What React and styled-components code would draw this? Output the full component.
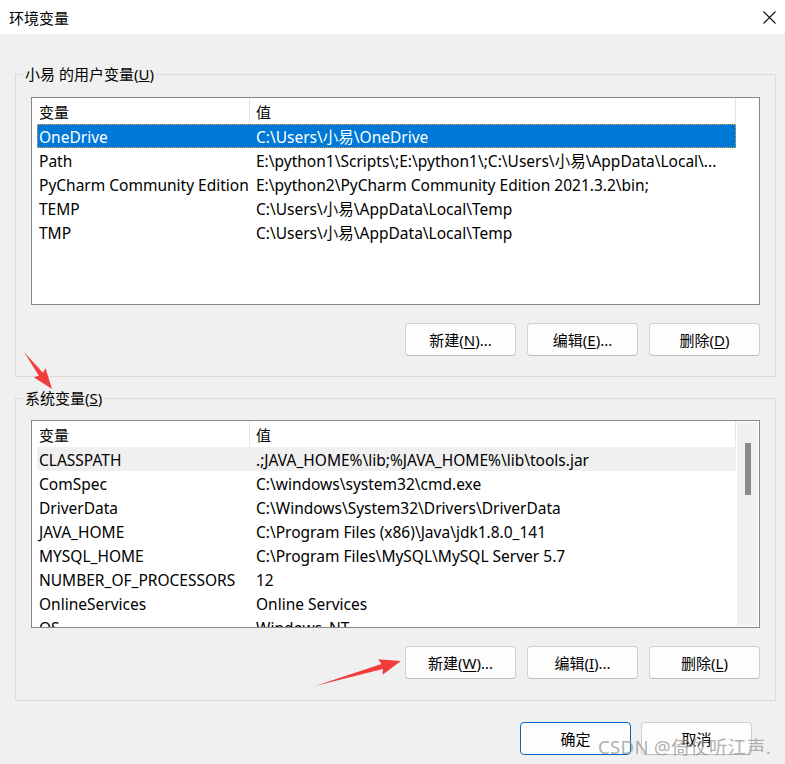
import React from 'react';
import styled, { createGlobalStyle } from 'styled-components';

const Global = createGlobalStyle`
  html, body { margin: 0; padding: 0; }
  body {
    width: 785px; height: 764px; overflow: hidden;
    font-family: "Noto Sans", "Noto Sans CJK SC", sans-serif;
    color: #000;
  }
  * { box-sizing: border-box; }
`;

const Window = styled.div`
  position: relative;
  width: 785px;
  height: 764px;
  background: #f0f0f0;
  display: flex;
  flex-direction: column;
`;

const TitleBar = styled.div`
  height: 34px;
  flex: none;
  background: #fff;
  display: flex;
  align-items: center;
  justify-content: space-between;
  padding: 0 9px 0 9px;
  font-size: 15px;
`;

const Body = styled.div`
  flex: 1;
  padding: 40px 9px 0 15px;
  display: flex;
  flex-direction: column;
`;

const GroupBox = styled.div`
  position: relative;
  border: 1px solid #dcdcdc;
  padding: ${p => p.$top}px 15px ${p => p.$bottom}px 15px;
  margin-top: ${p => p.$mt || 0}px;
`;

const Legend = styled.span`
  position: absolute;
  top: -11px;
  left: 7px;
  padding: 0 2px;
  background: #f0f0f0;
  font-size: 15px;
  line-height: 20px;
  white-space: nowrap;
`;

const ListView = styled.div`
  height: 208px;
  border: 1px solid #828790;
  background: #fff;
  display: flex;
  overflow: hidden;
`;

const ListContent = styled.div`
  flex: 1;
  min-width: 0;
  padding-left: 5px;
  display: flex;
  flex-direction: column;
  overflow: hidden;
`;

const HeaderRow = styled.div`
  height: 26px;
  flex: none;
  display: flex;
  font-size: 15px;
`;

const HeaderCell = styled.div`
  display: flex;
  align-items: center;
  padding-top: 1px;
  border-right: 1px solid #e5e5e5;
  ${p => (p.$first ? 'width: 213px; padding-left: 2px;' : 'flex: 1; padding-left: 6px;')}
`;

const Row = styled.div`
  height: 24px;
  flex: none;
  display: flex;
  align-items: center;
  padding-top: 1px;
  font-size: 15.5px;
  white-space: nowrap;
  background: ${p => (p.$selected ? '#0078d7' : p.$hover ? '#f0f0f0' : 'transparent')};
  color: ${p => (p.$selected ? '#fff' : '#000')};
  outline: ${p => (p.$selected ? '1px dotted #f0a640' : 'none')};
  outline-offset: -1px;
`;

const Cell = styled.div`
  overflow: hidden;
  ${p => (p.$first ? 'width: 213px; flex: none; padding-left: 2px;' : 'flex: 1; padding-left: 6px;')}
`;

const ScrollColumn = styled.div`
  width: 23px;
  flex: none;
  padding: 1px;
  display: flex;
`;

const Track = styled.div`
  flex: 1;
  background: ${p => (p.$visible ? '#f0f0f0' : 'transparent')};
  display: flex;
  justify-content: center;
`;

const Thumb = styled.div`
  width: 6px;
  height: 52px;
  margin-top: 21px;
  background: #8a8a8a;
`;

const ButtonRow = styled.div`
  display: flex;
  justify-content: flex-end;
  gap: ${p => p.$gap || 11}px;
  margin-top: ${p => p.$mt}px;
  padding-right: ${p => p.$pr || 0}px;
`;

const Button = styled.button`
  width: 111px;
  height: 33px;
  border-radius: 4px;
  border: 1px solid ${p => (p.$default ? '#0067c0' : '#d0d0d0')};
  border-bottom-color: ${p => (p.$default ? '#0067c0' : '#bcbcbc')};
  background: #fdfdfd;
  font-family: inherit;
  font-size: 15px;
  color: #000;
  padding: 0;
  display: flex;
  align-items: center;
  justify-content: center;
  u { text-underline-offset: 2px; }
`;

const Watermark = styled.div`
  position: absolute;
  right: 14px;
  bottom: 5px;
  font-size: 18.5px;
  color: rgba(150, 150, 150, 0.75);
  letter-spacing: 0.4px;
  pointer-events: none;
`;

const Overlay = styled.svg`
  position: absolute;
  left: 0;
  top: 0;
  pointer-events: none;
`;

const userVars = [
  ['OneDrive', 'C:\\Users\\小易\\OneDrive'],
  ['Path', 'E:\\python1\\Scripts\\;E:\\python1\\;C:\\Users\\小易\\AppData\\Local\\...'],
  ['PyCharm Community Edition', 'E:\\python2\\PyCharm Community Edition 2021.3.2\\bin;'],
  ['TEMP', 'C:\\Users\\小易\\AppData\\Local\\Temp'],
  ['TMP', 'C:\\Users\\小易\\AppData\\Local\\Temp'],
];

const sysVars = [
  ['CLASSPATH', '.;JAVA_HOME%\\lib;%JAVA_HOME%\\lib\\tools.jar'],
  ['ComSpec', 'C:\\windows\\system32\\cmd.exe'],
  ['DriverData', 'C:\\Windows\\System32\\Drivers\\DriverData'],
  ['JAVA_HOME', 'C:\\Program Files (x86)\\Java\\jdk1.8.0_141'],
  ['MYSQL_HOME', 'C:\\Program Files\\MySQL\\MySQL Server 5.7'],
  ['NUMBER_OF_PROCESSORS', '12'],
  ['OnlineServices', 'Online Services'],
  ['OS', 'Windows_NT'],
];

function VarList({ rows, selected, hover, scroll }) {
  return (
    <ListView>
      <ListContent>
        <HeaderRow>
          <HeaderCell $first>变量</HeaderCell>
          <HeaderCell>值</HeaderCell>
        </HeaderRow>
        {rows.map(([k, v], i) => (
          <Row key={k} $selected={i === selected} $hover={i === hover}>
            <Cell $first>{k}</Cell>
            <Cell>{v}</Cell>
          </Row>
        ))}
      </ListContent>
      <ScrollColumn>
        <Track $visible={scroll}>{scroll && <Thumb />}</Track>
      </ScrollColumn>
    </ListView>
  );
}

function Label({ text, m, after }) {
  return (
    <>
      {text}(<u>{m}</u>){after}
    </>
  );
}

export default function App() {
  return (
    <>
      <Global />
      <Window>
        <TitleBar>
          <span>环境变量</span>
          <svg width="13" height="13" viewBox="0 0 13 13">
            <path d="M0.5 0.5 L12.5 12.5 M12.5 0.5 L0.5 12.5" stroke="#111" strokeWidth="1.1" fill="none" />
          </svg>
        </TitleBar>
        <Body>
          <GroupBox $top={22} $bottom={20}>
            <Legend>小易 的用户变量(<u>U</u>)</Legend>
            <VarList rows={userVars} selected={0} />
            <ButtonRow $mt={18}>
              <Button><Label text="新建" m="N" after="..." /></Button>
              <Button><Label text="编辑" m="E" after="..." /></Button>
              <Button><Label text="删除" m="D" /></Button>
            </ButtonRow>
          </GroupBox>
          <GroupBox $top={21} $bottom={21} $mt={21}>
            <Legend>系统变量(<u>S</u>)</Legend>
            <VarList rows={sysVars} hover={0} scroll />
            <ButtonRow $mt={18}>
              <Button><Label text="新建" m="W" after="..." /></Button>
              <Button><Label text="编辑" m="I" after="..." /></Button>
              <Button><Label text="删除" m="L" /></Button>
            </ButtonRow>
          </GroupBox>
          <ButtonRow $mt={21} $pr={24} $gap={10}>
            <Button $default>确定</Button>
            <Button>取消</Button>
          </ButtonRow>
        </Body>
        <Overlay width="785" height="764" viewBox="0 0 785 764">
          <polygon
            fill="#f23c3c"
            points="24,352 42.9,372.8 45.6,368.3 52,389 33.8,377.2 38.9,375.8"
          />
          <polygon
            fill="#f23c3c"
            points="315,686 381.5,664.1 378.1,659.3 401,661 382.5,674.7 382.9,668.9"
          />
        </Overlay>
        <Watermark>CSDN @倚仗听江声.</Watermark>
      </Window>
    </>
  );
}
